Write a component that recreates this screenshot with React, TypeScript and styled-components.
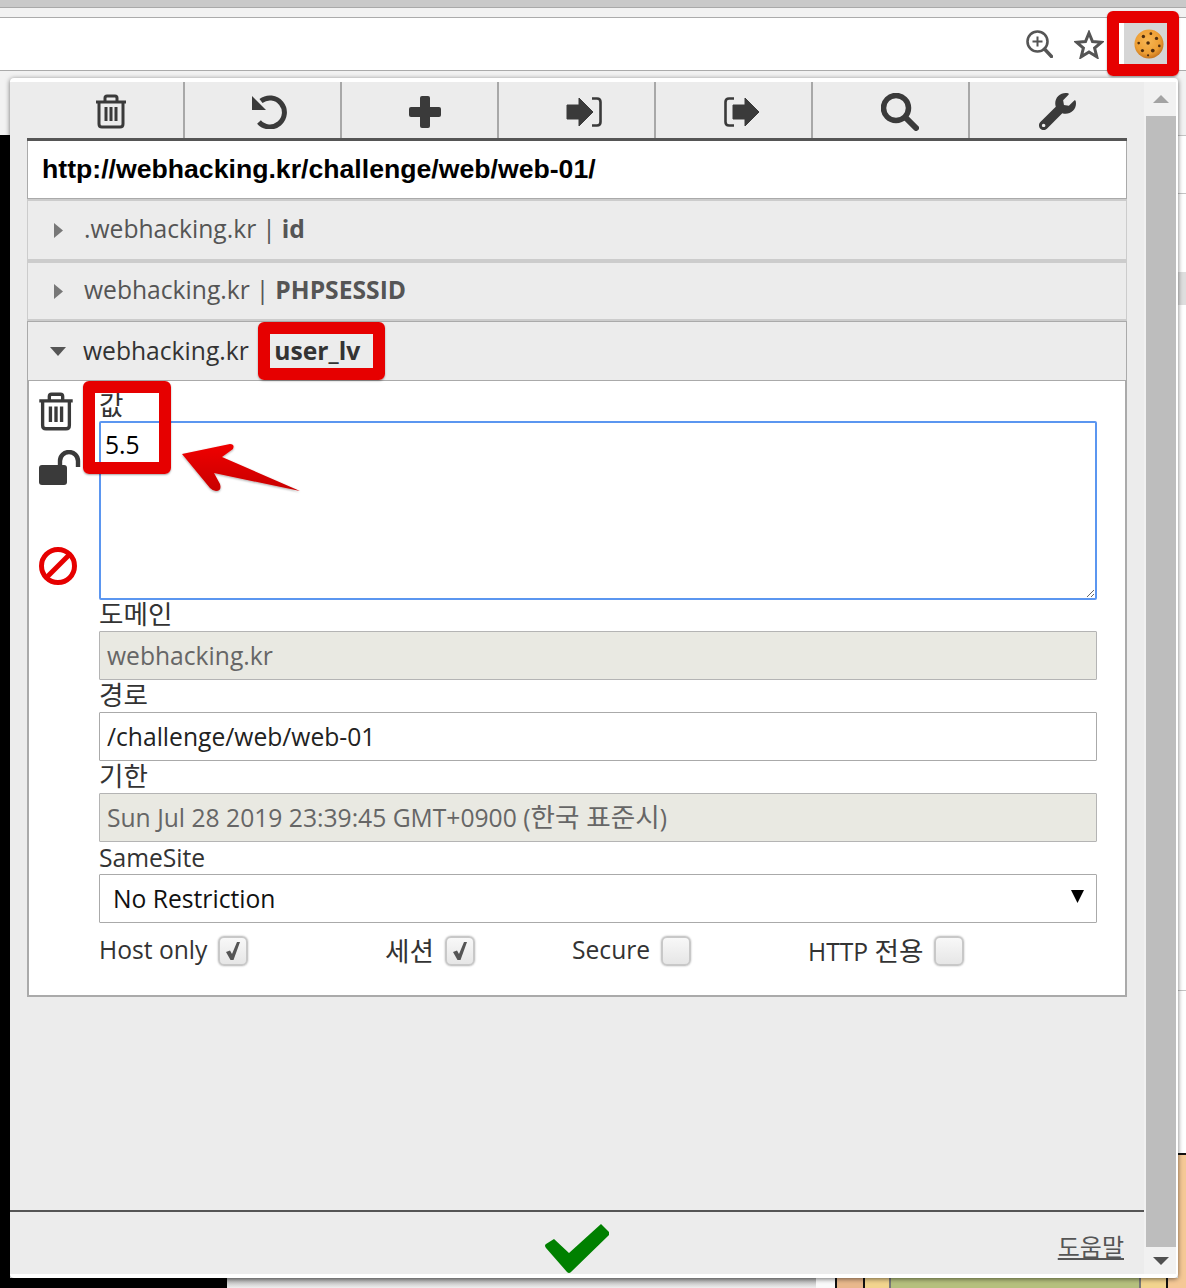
import React from "react";
import styled, { createGlobalStyle } from "styled-components";
import { FaWrench } from "react-icons/fa";

const GlobalStyle = createGlobalStyle`
  html, body { margin: 0; padding: 0; background: #fff; }
  * { box-sizing: border-box; }
`;

const FONT = `"Open Sans", "Noto Sans CJK KR", sans-serif`;
const TEXT_SIZE = "24.65px";

const Screen = styled.div`
  position: relative;
  width: 1186px;
  height: 1288px;
  overflow: hidden;
  display: flex;
  flex-direction: column;
  font-family: ${FONT};
`;

const TitleStrip = styled.div`
  height: 8px;
  background: #c9c9c9;
  border-bottom: 1px solid #a9a9a9;
`;
const TabStrip = styled.div`
  height: 10px;
  background: #f2f2f2;
  border-bottom: 1px solid #ababab;
`;
const AddressBar = styled.div`
  height: 53px;
  background: #fff;
  border-bottom: 1px solid #ababab;
  display: flex;
  justify-content: flex-end;
  align-items: stretch;
  padding-right: 19px;
`;
const OmniIcons = styled.div`
  display: flex;
  align-items: center;
  gap: 21px;
  padding-right: 20px;
`;
const CookieButton = styled.div`
  width: 43px;
  background: #d5d5d5;
  display: flex;
  align-items: center;
  padding-left: 10px;
`;
const ShelfStrip = styled.div`
  height: 64px;
  background: #f2f2f2;
`;

const PageBody = styled.div`
  flex: 1;
  display: flex;
  flex-direction: column;
  min-height: 0;
`;
const PageUpper = styled.div`
  flex: 1;
  display: flex;
  justify-content: space-between;
  background: #fff;
`;
const BlackRail = styled.div`
  width: 10px;
  background: #000;
`;
const RightRail = styled.div`
  width: 8px;
  display: flex;
  flex-direction: column;
`;
const RailBlock = styled.div<{ $h: number; $bg?: string; $line?: string }>`
  height: ${(p) => p.$h}px;
  background: ${(p) => p.$bg || "#fff"};
  border-top: 1px solid ${(p) => p.$line || "#c4c4c4"};
`;
const RailFill = styled.div`
  flex: 1;
  background: #f5c896;
  border-top: 2px solid #111;
`;
const BottomStrip = styled.div`
  height: 10px;
  display: flex;
`;
const StripCell = styled.div<{ $w?: number; $bg: string; $edge?: string }>`
  ${(p) => (p.$w ? `width: ${p.$w}px;` : "flex: 1;")}
  background: ${(p) => p.$bg};
  ${(p) => (p.$edge ? `border-left: 2px solid ${p.$edge};` : "")}
`;

const Popup = styled.div`
  position: absolute;
  left: 10px;
  top: 78px;
  width: 1168px;
  height: 1200px;
  display: flex;
  background: #ececec;
  border-top: 4px solid #fff;
  border-bottom: 4px solid #fff;
  border-right: 2px solid #fff;
  border-radius: 4px;
  box-shadow: 0 1px 5px rgba(0, 0, 0, 0.55);
`;
const PopupMain = styled.div`
  width: 1134px;
  display: flex;
  flex-direction: column;
`;
const Content = styled.div`
  flex: 1;
  padding: 0 17px;
`;

const ActionBar = styled.div`
  display: flex;
  height: 59px;
  border-bottom: 3px solid #555;
`;
const ActionButton = styled.div<{ $pad: number }>`
  width: 157px;
  display: flex;
  align-items: center;
  justify-content: center;
  padding: 3px 0 0 ${(p) => p.$pad}px;
  border-right: 2px solid #a8a8a8;
  &:first-child {
    width: 158px;
  }
  &:last-child {
    border-right: 0;
  }
`;

const UrlBar = styled.div`
  height: 58px;
  background: #fff;
  border: 1px solid #aaa;
  border-top: 0;
  padding-left: 14px;
  display: flex;
  align-items: center;
  font: bold 26.65px "Liberation Sans", Arial, sans-serif;
  color: #000;
`;

const CookieRow = styled.div<{ $open?: boolean; $first?: boolean }>`
  height: ${(p) => (p.$first ? 62 : 60)}px;
  display: flex;
  align-items: center;
  background: #ececec;
  font-size: ${TEXT_SIZE};
  color: ${(p) => (p.$open ? "#333" : "#555")};
  border: ${(p) => (p.$open ? "1px solid #aaa" : "3px solid #ccc")};
  border-width: ${(p) => (p.$open ? "1px" : "2px 1px 2px 1px")};
  padding-left: ${(p) => (p.$open ? 22 : 26)}px;
  padding-bottom: ${(p) => (p.$open ? 2 : 4)}px;
`;
const Caret = styled.svg<{ $open?: boolean }>`
  width: ${(p) => (p.$open ? 16 : 9)}px;
  height: ${(p) => (p.$open ? 9 : 15)}px;
  margin-top: ${(p) => (p.$open ? 2 : 4)}px;
  margin-right: ${(p) => (p.$open ? 17 : 21)}px;
  fill: ${(p) => (p.$open ? "#555" : "#777")};
`;
const Sep = styled.span`
  margin: 0 6px;
`;
const CookieName = styled.b`
  font-weight: 700;
`;

const Panel = styled.div`
  height: 616px;
  background: #fff;
  border: 2px solid #aaa;
  border-top: 0;
  display: flex;
`;
const SideIcons = styled.div`
  width: 70px;
  padding: 11px 0 0 9px;
  display: flex;
  flex-direction: column;
  align-items: flex-start;
`;
const SideIcon = styled.svg<{ $gap?: number; $left?: number }>`
  margin-top: ${(p) => p.$gap || 0}px;
  margin-left: ${(p) => p.$left || 0}px;
  display: block;
`;
const Fields = styled.div`
  width: 998px;
  padding-top: 8px;
  display: flex;
  flex-direction: column;
`;
const FieldLabel = styled.label<{ $h?: number; $line?: number }>`
  display: block;
  height: ${(p) => p.$h || 32}px;
  line-height: ${(p) => p.$line || 30}px;
  font-size: ${TEXT_SIZE};
  color: #333;
  white-space: nowrap;
`;
const Hangul = styled.span`
  font-size: 26.6px;
`;
const ValueArea = styled.textarea`
  display: block;
  width: 998px;
  height: 179px;
  border: 2px solid #5b96f0;
  border-radius: 2px;
  outline: none;
  padding: 6px 4px;
  margin: 0;
  font: ${TEXT_SIZE}/32px ${FONT};
  color: #000;
  background: #fff;
`;
const TextField = styled.div<{ $locked?: boolean }>`
  width: 998px;
  height: 49px;
  border: 1px solid ${(p) => (p.$locked ? "#b4b4b4" : "#aaa")};
  padding: 0 7px;
  font-size: ${TEXT_SIZE};
  line-height: 47px;
  white-space: nowrap;
  color: ${(p) => (p.$locked ? "#666" : "#222")};
  background: ${(p) => (p.$locked ? "#e9e9e2" : "#fff")};
  border-radius: 1px;
`;
const SelectBox = styled.div`
  height: 49px;
  border: 1px solid #aaa;
  border-radius: 1px;
  display: flex;
  align-items: center;
  justify-content: space-between;
  padding: 0 12px 1px 13px;
  font-size: ${TEXT_SIZE};
  color: #111;
`;
const SelectArrow = styled.svg`
  width: 13px;
  height: 13px;
  margin-bottom: 3px;
`;
const Flags = styled.div`
  display: grid;
  grid-template-columns: 286px 187px 236px auto;
  margin-top: 13px;
`;
const Flag = styled.div`
  display: flex;
  align-items: center;
  gap: 11px;
  font-size: ${TEXT_SIZE};
  color: #333;
  height: 30px;
`;
const FlagText = styled.span`
  margin-top: -3px;
`;
const FlagBox = styled.span`
  width: 30px;
  height: 30px;
  border: 2px solid #c8c8c8;
  border-radius: 6px;
  background: linear-gradient(#f8f8f8, #e6e6e6);
  box-shadow: 0 0 2px rgba(0, 0, 0, 0.3);
  display: flex;
  align-items: center;
  justify-content: center;
`;

const Footer = styled.div`
  height: 64px;
  border-top: 2px solid #555;
  position: relative;
  display: flex;
  justify-content: center;
  align-items: flex-start;
  padding: 12px 0 0 0;
`;
const HelpLink = styled.a`
  position: absolute;
  right: 20px;
  top: 17px;
  font-size: 24px;
  line-height: 36px;
  color: #555;
  text-decoration: underline;
`;

const ScrollTrack = styled.div`
  width: 32px;
  display: flex;
  flex-direction: column;
  background: #f1f1f1;
`;
const ScrollEnd = styled.div<{ $h: number }>`
  height: ${(p) => p.$h}px;
  display: flex;
  align-items: center;
  justify-content: center;
  padding-left: 2px;
`;
const ScrollThumb = styled.div`
  flex: 1;
  margin-left: 2px;
  background: #bdbdbd;
`;

const RedBox = styled.div<{ $x: number; $y: number; $w: number; $h: number }>`
  position: absolute;
  left: ${(p) => p.$x}px;
  top: ${(p) => p.$y}px;
  width: ${(p) => p.$w}px;
  height: ${(p) => p.$h}px;
  border: 12px solid #e60000;
  border-radius: 6px;
  box-shadow: 0 1px 2px rgba(0, 0, 0, 0.35);
  pointer-events: none;
`;
const Arrow = styled.svg`
  position: absolute;
  left: 176px;
  top: 438px;
  pointer-events: none;
`;

const DARK = "#3a3a3a";

const TrashIcon = ({ w = 32, h = 35 }: { w?: number; h?: number }) => (
  <svg width={w} height={h} viewBox="0 0 32 35" fill="none" stroke={DARK} strokeWidth="3">
    <path d="M1 8H31M10 8V4Q10 2 12 2H20Q22 2 22 4V8M4 8V30Q4 33 7 33H25Q28 33 28 30V8" />
    <path d="M11 13V27M16 13V27M21 13V27" />
  </svg>
);

const TickIcon = () => (
  <svg width="18" height="20" viewBox="0 0 18 20">
    <path d="M2 11L6 9.5L8 13L13 1L16 1L9.5 19L6.5 19Z" fill="#555" />
  </svg>
);

const App = () => {
  return (
    <Screen>
      <GlobalStyle />
      <TitleStrip />
      <TabStrip />
      <AddressBar>
        <OmniIcons>
          <svg width="27" height="28" viewBox="0 0 27 28" fill="none" stroke="#555" strokeWidth="2.6">
            <circle cx="11.5" cy="11.5" r="10" />
            <path d="M11.5 6.5V16.5M6.5 11.5H16.5" strokeWidth="2" />
            <path d="M18.5 19L25.5 26.5" strokeWidth="3.4" strokeLinecap="round" />
          </svg>
          <svg width="30" height="29" viewBox="0 0 30 29" fill="none" stroke="#555" strokeWidth="3">
            <path d="M15 3L18.5 11.5L27.5 12.2L20.6 18L22.8 26.8L15 22L7.2 26.8L9.4 18L2.5 12.2L11.5 11.5Z" />
          </svg>
        </OmniIcons>
        <CookieButton>
          <svg width="30" height="30" viewBox="0 0 32 32">
            <defs>
              <radialGradient id="dough" cx="45%" cy="40%" r="60%">
                <stop offset="0%" stopColor="#f7b653" />
                <stop offset="70%" stopColor="#ee9f35" />
                <stop offset="100%" stopColor="#c8771e" />
              </radialGradient>
            </defs>
            <circle cx="16" cy="16" r="15.5" fill="url(#dough)" />
            <g fill="#4e2c0e">
              <circle cx="10" cy="8" r="1.8" />
              <circle cx="18" cy="5" r="1.5" />
              <circle cx="24" cy="10" r="1.8" />
              <circle cx="5" cy="15" r="1.4" />
              <circle cx="15" cy="15" r="1.9" />
              <circle cx="27" cy="18" r="1.4" />
              <circle cx="9" cy="23" r="1.7" />
              <circle cx="20" cy="23" r="2" />
              <circle cx="15" cy="28" r="1.2" />
            </g>
          </svg>
        </CookieButton>
      </AddressBar>
      <ShelfStrip />
      <PageBody>
        <PageUpper>
          <BlackRail />
          <RightRail>
            <RailBlock $h={58} />
            <RailBlock $h={79} />
            <RailBlock $h={33} $bg="#dedede" $line="#dedede" />
            <RailBlock $h={685} $line="#fff" />
            <RailBlock $h={163} />
            <RailFill />
          </RightRail>
        </PageUpper>
        <BottomStrip>
          <StripCell $w={227} $bg="#000" />
          <StripCell $bg="linear-gradient(#a9a9a9, #efefef)" />
          <StripCell $w={19} $bg="#fafafa" />
          <StripCell $w={28} $bg="#e9b88c" $edge="#111" />
          <StripCell $w={26} $bg="#f2d48e" $edge="#111" />
          <StripCell $w={250} $bg="#b5c07d" $edge="#777" />
          <StripCell $w={27} $bg="#f2d48e" $edge="#777" />
          <StripCell $w={20} $bg="#f5c896" $edge="#111" />
        </BottomStrip>
      </PageBody>

      <Popup>
        <PopupMain>
          <Content>
            <ActionBar>
              <ActionButton $pad={11}>
                <TrashIcon />
              </ActionButton>
              <ActionButton $pad={13}>
                <svg width="36" height="35" viewBox="0 0 36 35" fill="none" stroke={DARK} strokeWidth="5">
                  <path d="M10 7A14.5 14.5 0 1 1 8 28" />
                  <path d="M1 2V16H15Z" fill={DARK} stroke="none" />
                </svg>
              </ActionButton>
              <ActionButton $pad={11}>
                <svg width="32" height="32" viewBox="0 0 32 32" fill={DARK}>
                  <rect x="0" y="11" width="32" height="10" rx="2" />
                  <rect x="11" y="0" width="10" height="32" rx="2" />
                </svg>
              </ActionButton>
              <ActionButton $pad={15}>
                <svg width="36" height="30" viewBox="0 0 36 30">
                  <path d="M1 8H13V1L27 15L13 29V22H1Z" fill={DARK} stroke={DARK} strokeLinejoin="round" />
                  <path d="M26 1.5H31Q34.5 1.5 34.5 5V25Q34.5 28.5 31 28.5H26" fill="none" stroke={DARK} strokeWidth="2.6" />
                </svg>
              </ActionButton>
              <ActionButton $pad={17}>
                <svg width="36" height="30" viewBox="0 0 36 30">
                  <path d="M10 1.5H5Q1.5 1.5 1.5 5V25Q1.5 28.5 5 28.5H10" fill="none" stroke={DARK} strokeWidth="2.6" />
                  <path d="M9 8H21V1L35 15L21 29V22H9Z" fill={DARK} stroke={DARK} strokeLinejoin="round" />
                </svg>
              </ActionButton>
              <ActionButton $pad={19}>
                <svg width="38" height="38" viewBox="0 0 38 38" fill="none" stroke={DARK}>
                  <circle cx="15" cy="15" r="12.5" strokeWidth="5.5" />
                  <path d="M25 25L35 35" strokeWidth="6" strokeLinecap="round" />
                </svg>
              </ActionButton>
              <ActionButton $pad={17}>
                <FaWrench size={37} color={DARK} />
              </ActionButton>
            </ActionBar>
            <UrlBar>http://webhacking.kr/challenge/web/web-01/</UrlBar>
            <CookieRow $first>
              <Caret viewBox="0 0 9 15">
                <path d="M0 0L9 7.5L0 15Z" />
              </Caret>
              .webhacking.kr<Sep>|</Sep>
              <CookieName>id</CookieName>
            </CookieRow>
            <CookieRow>
              <Caret viewBox="0 0 9 15">
                <path d="M0 0L9 7.5L0 15Z" />
              </Caret>
              webhacking.kr<Sep>|</Sep>
              <CookieName>PHPSESSID</CookieName>
            </CookieRow>
            <CookieRow $open>
              <Caret $open viewBox="0 0 16 9">
                <path d="M0 0H16L8 9Z" />
              </Caret>
              webhacking.kr<Sep>|</Sep>
              <CookieName>user_lv</CookieName>
            </CookieRow>
            <Panel>
              <SideIcons>
                <TrashIcon w={36} h={39} />
                <SideIcon width="42" height="35" $gap={19} $left={1} viewBox="0 0 42 35">
                  <rect x="0" y="15" width="28" height="20" rx="3" fill={DARK} />
                  <path d="M21 15V11A9 9 0 0 1 39 11V17" fill="none" stroke={DARK} strokeWidth="4.4" />
                </SideIcon>
                <SideIcon width="38" height="38" $gap={62} $left={1} viewBox="0 0 38 38" fill="none" stroke="#e60000" strokeWidth="5">
                  <circle cx="19" cy="19" r="16.5" />
                  <path d="M8 30L30 8" />
                </SideIcon>
              </SideIcons>
              <Fields>
                <FieldLabel $line={33}><Hangul>값</Hangul></FieldLabel>
                <ValueArea defaultValue="5.5" />
                <FieldLabel $h={31} $line={29}><Hangul>도메인</Hangul></FieldLabel>
                <TextField $locked>webhacking.kr</TextField>
                <FieldLabel><Hangul>경로</Hangul></FieldLabel>
                <TextField>/challenge/web/web-01</TextField>
                <FieldLabel><Hangul>기한</Hangul></FieldLabel>
                <TextField $locked>
                  Sun Jul 28 2019 23:39:45 GMT+0900 (<Hangul>한국 표준시</Hangul>)
                </TextField>
                <FieldLabel $line={32}>SameSite</FieldLabel>
                <SelectBox>
                  No Restriction
                  <SelectArrow viewBox="0 0 13 13">
                    <path d="M0 0H13L6.5 13Z" fill="#000" />
                  </SelectArrow>
                </SelectBox>
                <Flags>
                  <Flag>
                    <FlagText>Host only</FlagText>
                    <FlagBox>
                      <TickIcon />
                    </FlagBox>
                  </Flag>
                  <Flag>
                    <FlagText><Hangul>세션</Hangul></FlagText>
                    <FlagBox>
                      <TickIcon />
                    </FlagBox>
                  </Flag>
                  <Flag>
                    <FlagText>Secure</FlagText>
                    <FlagBox />
                  </Flag>
                  <Flag>
                    <FlagText>HTTP <Hangul>전용</Hangul></FlagText>
                    <FlagBox />
                  </Flag>
                </Flags>
              </Fields>
            </Panel>
          </Content>
          <Footer>
            <svg width="64" height="50" viewBox="0 0 64 50" fill="#008000">
              <path d="M9 15L24 29L56 0L64 8Q65 10 63 12L26 48Q24 50 22 48L1 24Q-1 21 1 20Z" />
            </svg>
            <HelpLink>도움말</HelpLink>
          </Footer>
        </PopupMain>
        <ScrollTrack>
          <ScrollEnd $h={34}>
            <svg width="16" height="8" viewBox="0 0 16 8">
              <path d="M8 0L16 8H0Z" fill="#a3a3a3" />
            </svg>
          </ScrollEnd>
          <ScrollThumb />
          <ScrollEnd $h={27}>
            <svg width="16" height="8" viewBox="0 0 16 8">
              <path d="M0 0H16L8 8Z" fill="#505050" />
            </svg>
          </ScrollEnd>
        </ScrollTrack>
      </Popup>

      <RedBox $x={1107} $y={11} $w={72} $h={65} />
      <RedBox $x={258} $y={322} $w={127} $h={58} />
      <RedBox $x={83} $y={381} $w={88} $h={93} />
      <Arrow width="130" height="60" viewBox="0 0 130 60">
        <defs>
          <linearGradient id="arrowRed" x1="0" y1="0" x2="0" y2="1">
            <stop offset="0%" stopColor="#f00000" />
            <stop offset="100%" stopColor="#c80000" />
          </linearGradient>
          <filter id="arrowShade" x="-10%" y="-10%" width="120%" height="130%">
            <feDropShadow dx="0" dy="1" stdDeviation="1" floodOpacity="0.35" />
          </filter>
        </defs>
        <path
          d="M6 16L54 6Q59 6 57 11L46 19L124 53L38 35L44 46Q46 53 40 53Q37 53 34 50Z"
          fill="url(#arrowRed)"
          filter="url(#arrowShade)"
        />
      </Arrow>
    </Screen>
  );
};

export default App;
